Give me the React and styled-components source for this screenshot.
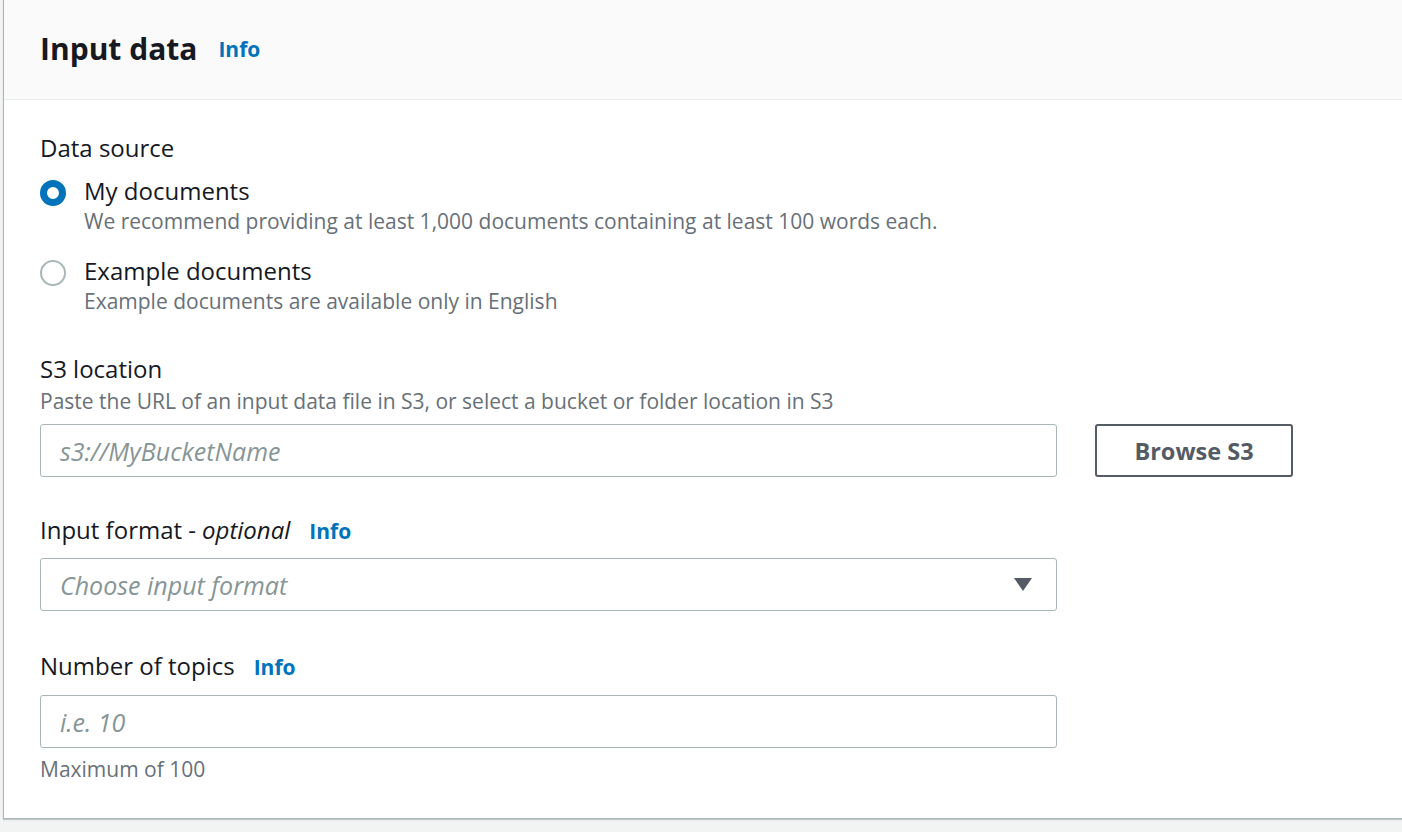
import styled, { createGlobalStyle } from "styled-components";

const GlobalStyle = createGlobalStyle`
  html, body {
    margin: 0;
    padding: 0;
    background: #f2f3f3;
    font-family: "Open Sans", "Noto Sans", sans-serif;
  }
`;

const Page = styled.div`
  width: 1402px;
  height: 832px;
  padding-left: 3px;
  box-sizing: border-box;
  overflow: hidden;
`;

const Panel = styled.section`
  width: 1420px;
  background: #ffffff;
  border-left: 1px solid #aab7b8;
  border-bottom: 1px solid #aab7b8;
  box-shadow: 0 1px 1px rgba(0, 28, 36, 0.2);
`;

const Header = styled.header`
  height: 100px;
  background: #fafafa;
  border-bottom: 1px solid #eaeded;
  display: flex;
  align-items: center;
  padding-left: 36px;
  padding-bottom: 2px;
  box-sizing: border-box;
`;

const Title = styled.h2`
  margin: 0;
  font-size: 30px;
  font-weight: 700;
  color: #16191f;
`;

const InfoLink = styled.a`
  color: #0073bb;
  font-weight: 700;
  font-size: 21px;
  margin-left: ${(p) => p.$gap || 19}px;
  text-decoration: none;
`;

const Body = styled.div`
  padding: 33px 36px 34px;
  display: flex;
  flex-direction: column;
`;

const Field = styled.div`
  display: flex;
  flex-direction: column;
  margin-bottom: ${(p) => p.$mb || 0}px;
`;

const Label = styled.div`
  font-size: 24px;
  line-height: 30px;
  color: #16191f;
  display: flex;
  align-items: baseline;

  em {
    font-style: italic;
    margin-left: 6px;
  }
`;

const Hint = styled.div`
  font-size: 21px;
  line-height: 30px;
  color: #687078;
  margin-top: ${(p) => p.$mt || 0}px;
`;

const RadioRow = styled.label`
  display: flex;
  align-items: flex-start;
  margin-top: ${(p) => p.$mt || 0}px;
`;

const RadioDot = styled.span`
  width: 26px;
  height: 26px;
  border-radius: 50%;
  box-sizing: border-box;
  flex-shrink: 0;
  margin-top: 4px;
  margin-right: 18px;
  border: ${(p) => (p.$checked ? "7px solid #0073bb" : "2px solid #aab7b8")};
  background: #fff;
`;

const RadioText = styled.div`
  display: flex;
  flex-direction: column;
`;

const Row = styled.div`
  display: flex;
  align-items: center;
  margin-top: 8px;
`;

const TextBox = styled.div`
  width: 1017px;
  height: 53px;
  border: 1px solid #aab7b8;
  border-radius: 3px;
  box-sizing: border-box;
  display: flex;
  align-items: center;
  justify-content: space-between;
  padding: 0 24px 0 19px;
  font-size: 25px;
  font-style: italic;
  color: #879596;
  margin-top: ${(p) => p.$mt || 0}px;
`;

const Caret = styled.span`
  width: 0;
  height: 0;
  border-left: 9px solid transparent;
  border-right: 9px solid transparent;
  border-top: 13px solid #545b64;
`;

const Button = styled.button`
  margin-left: 38px;
  width: 198px;
  height: 53px;
  border: 2px solid #545b64;
  border-radius: 3px;
  background: #fff;
  color: #545b64;
  font-family: inherit;
  font-size: 23.5px;
  font-weight: 700;
`;

export default function App() {
  return (
    <>
      <GlobalStyle />
      <Page>
        <Panel>
          <Header>
            <Title>Input data</Title>
            <InfoLink href="#" $gap={21}>
              Info
            </InfoLink>
          </Header>
          <Body>
            <Field $mb={38}>
              <Label>Data source</Label>
              <RadioRow $mt={13}>
                <RadioDot $checked />
                <RadioText>
                  <Label>My documents</Label>
                  <Hint>
                    We recommend providing at least 1,000 documents containing at
                    least 100 words each.
                  </Hint>
                </RadioText>
              </RadioRow>
              <RadioRow $mt={20}>
                <RadioDot />
                <RadioText>
                  <Label>Example documents</Label>
                  <Hint>Example documents are available only in English</Hint>
                </RadioText>
              </RadioRow>
            </Field>
            <Field $mb={38}>
              <Label>S3 location</Label>
              <Hint $mt={2}>
                Paste the URL of an input data file in S3, or select a bucket or
                folder location in S3
              </Hint>
              <Row>
                <TextBox>s3://MyBucketName</TextBox>
                <Button>Browse S3</Button>
              </Row>
            </Field>
            <Field $mb={40}>
              <Label>
                Input format -<em>optional</em>
                <InfoLink href="#">Info</InfoLink>
              </Label>
              <TextBox $mt={12}>
                Choose input format
                <Caret />
              </TextBox>
            </Field>
            <Field>
              <Label>
                Number of topics
                <InfoLink href="#">Info</InfoLink>
              </Label>
              <TextBox $mt={13}>i.e. 10</TextBox>
              <Hint $mt={6}>Maximum of 100</Hint>
            </Field>
          </Body>
        </Panel>
      </Page>
    </>
  );
}
